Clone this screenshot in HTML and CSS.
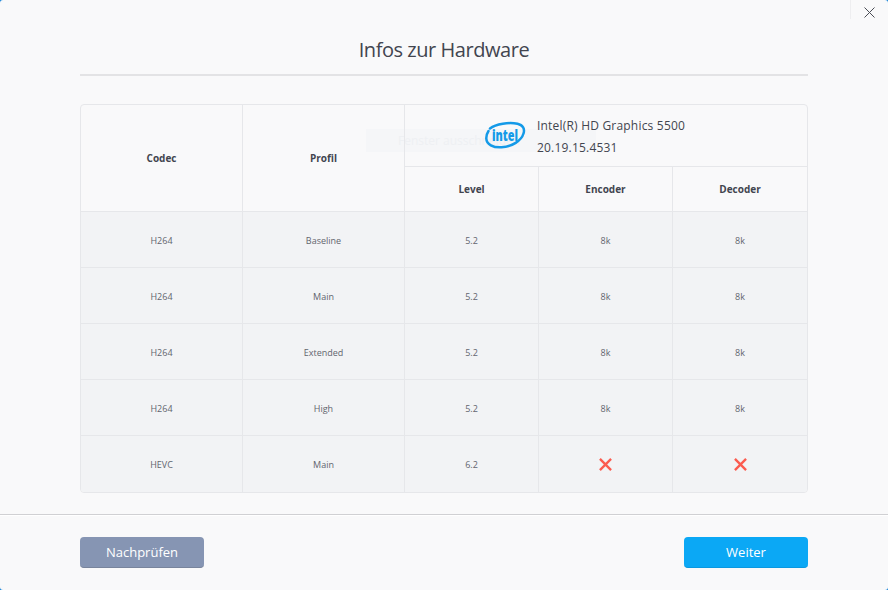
FILE: index.html
```html
<!DOCTYPE html>
<html lang="en">
<head>
    <meta charset="UTF-8">
    <meta name="viewport" content="width=device-width, initial-scale=1.0">
    <title>Infos zur Hardware</title>
    <link rel="stylesheet" href="styles.css">
</head>
<body>

<div class="window">
    <div class="close-area">
        <svg class="close-icon" viewBox="0 0 11 11" fill="none" stroke="#4a4d55" stroke-width="1">
            <path d="M0.5 0.5L10.5 10.5M10.5 0.5L0.5 10.5" />
        </svg>
    </div>

    <div class="content">
        <h1>Infos zur Hardware</h1>

        <div class="table-wrap">
            <div class="ghost-tip">Fenster ausschneiden</div>
            <table class="hw-table">
                <colgroup>
                    <col class="col-codec">
                    <col class="col-profil">
                    <col class="col-num">
                    <col class="col-num">
                    <col class="col-last">
                </colgroup>
                <thead>
                    <tr class="row-gpu">
                        <th rowspan="2">Codec</th>
                        <th rowspan="2">Profil</th>
                        <th colspan="3" class="gpu-cell">
                            <div class="gpu">
                                <svg class="intel-logo" viewBox="0 0 40 27" fill="none">
                                    <path d="M5 6.5C11 1.8 24 0 32.5 1.8C38 3 40 7 38.5 11.5C36.5 18.5 27 24.8 16.5 25.3C8 25.7 1.5 22.5 1.3 16.5C1.2 13.5 2.2 11 3.5 9" stroke="#149ae8" stroke-width="2.5" stroke-linecap="round" />
                                    <text x="7" y="18.5" class="intel-word" textLength="26" lengthAdjust="spacingAndGlyphs">intel</text>
                                </svg>
                                <div class="gpu-info">
                                    <span>Intel(R) HD Graphics 5500</span>
                                    <span>20.19.15.4531</span>
                                </div>
                            </div>
                        </th>
                    </tr>
                    <tr class="row-sub">
                        <th>Level</th>
                        <th>Encoder</th>
                        <th>Decoder</th>
                    </tr>
                </thead>
                <tbody>
                    <tr><td>H264</td><td>Baseline</td><td>5.2</td><td>8k</td><td>8k</td></tr>
                    <tr><td>H264</td><td>Main</td><td>5.2</td><td>8k</td><td>8k</td></tr>
                    <tr><td>H264</td><td>Extended</td><td>5.2</td><td>8k</td><td>8k</td></tr>
                    <tr><td>H264</td><td>High</td><td>5.2</td><td>8k</td><td>8k</td></tr>
                    <tr class="row-last">
                        <td>HEVC</td>
                        <td>Main</td>
                        <td>6.2</td>
                        <td>
                            <svg class="cross" viewBox="0 0 14 14" fill="none" stroke="#fb5b4f" stroke-width="2.5">
                                <path d="M1 1L13 13M13 1L1 13" />
                            </svg>
                        </td>
                        <td>
                            <svg class="cross" viewBox="0 0 14 14" fill="none" stroke="#fb5b4f" stroke-width="2.5">
                                <path d="M1 1L13 13M13 1L1 13" />
                            </svg>
                        </td>
                    </tr>
                </tbody>
            </table>
        </div>
    </div>

    <div class="footer">
        <button class="btn btn-grey">Nachprüfen</button>
        <button class="btn btn-blue">Weiter</button>
    </div>
</div>

</body>
</html>
```

FILE: styles.css
```css
html, body {
    margin: 0;
    padding: 0;
}

body {
    width: 888px;
    height: 590px;
    overflow: hidden;
    background-color: #1583d8;
    font-family: "Open Sans", "Noto Sans", sans-serif;
    color: #42454f;
}

.window {
    position: relative;
    display: flex;
    flex-direction: column;
    height: 590px;
    background-color: #f9f9fa;
    border-radius: 3px;
}

.close-area {
    position: absolute;
    top: 0;
    right: 0;
    width: 37px;
    height: 19px;
    border-left: 1px solid #eeeef0;
}

.close-icon {
    position: absolute;
    top: 7px;
    left: 13px;
    width: 11px;
    height: 11px;
}

.content {
    flex: 1;
    padding: 0 80px;
}

h1 {
    margin: 0;
    height: 74px;
    border-bottom: 2px solid #e3e3e5;
    font-size: 20px;
    font-weight: 400;
    letter-spacing: -0.45px;
    line-height: 100px;
    text-align: center;
    color: #42454f;
}

.table-wrap {
    position: relative;
    margin-top: 28px;
}

.ghost-tip {
    position: absolute;
    top: 25px;
    left: 286px;
    width: 198px;
    height: 23px;
    padding-left: 32px;
    background-color: #f5f6f8;
    font-size: 12px;
    line-height: 23px;
    color: #eef0f3;
}

.hw-table {
    position: relative;
    width: 728px;
    table-layout: fixed;
    border-collapse: separate;
    border-spacing: 0;
    border: 1px solid #e6e7ea;
    border-radius: 4px;
    overflow: hidden;
}

.col-codec {
    width: 161px;
}

.col-profil {
    width: 162px;
}

.col-num {
    width: 134px;
}

.col-last {
    width: 135px;
}

.hw-table th,
.hw-table td {
    padding: 0;
    text-align: center;
    border-left: 1px solid #e6e7ea;
    border-bottom: 1px solid #e6e7ea;
}

.hw-table th:first-child,
.hw-table td:first-child {
    border-left: none;
}

.row-sub th:first-child {
    border-left: 1px solid #e6e7ea;
}

.hw-table th {
    font-size: 10px;
    font-weight: 700;
    color: #42454f;
}

.row-gpu {
    height: 62px;
}

.row-sub {
    height: 45px;
}

.hw-table td {
    height: 54px;
    padding-top: 1px;
    background-color: #f2f3f5;
    font-size: 9px;
    color: #62656e;
}

.hw-table .row-last td {
    height: 56px;
    padding-top: 0;
    border-bottom: none;
}

.gpu {
    display: flex;
    align-items: center;
    justify-content: flex-start;
    gap: 12px;
    padding-left: 80px;
}

.intel-logo {
    width: 40px;
    height: 27px;
    overflow: visible;
}

.intel-word {
    font-family: "Open Sans", sans-serif;
    font-size: 15px;
    font-weight: 800;
    fill: #149ae8;
}

.gpu-info {
    display: flex;
    flex-direction: column;
    gap: 6px;
    margin-top: 2px;
    font-size: 12px;
    font-weight: 400;
    letter-spacing: 0.2px;
    line-height: 16px;
    text-align: left;
    color: #42454f;
}

.cross {
    display: block;
    width: 13px;
    height: 13px;
    margin: 0 auto;
}

.footer {
    display: flex;
    justify-content: space-between;
    height: 53px;
    padding: 22px 80px 0;
    border-top: 1px solid #d0d0d3;
    box-shadow: inset 0 1px 0 #ffffff;
}

.btn {
    width: 124px;
    height: 31px;
    padding: 0;
    border: none;
    border-radius: 4px;
    font-family: "Open Sans", "Noto Sans", sans-serif;
    font-size: 13px;
    color: #ffffff;
    cursor: pointer;
}

.btn-grey {
    background-color: #8695b3;
    border-bottom: 1px solid #78849c;
}

.btn-blue {
    background-color: #0ba8f5;
    border-bottom: 1px solid #0a98e0;
}
```
